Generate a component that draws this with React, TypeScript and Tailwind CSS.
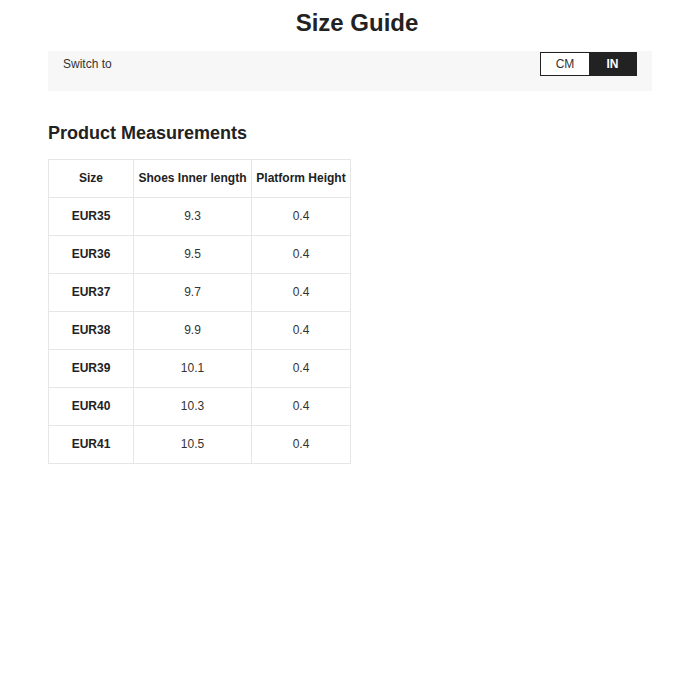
import { useState } from "react";

const rows = [
  { size: "EUR35", inner: "9.3", platform: "0.4" },
  { size: "EUR36", inner: "9.5", platform: "0.4" },
  { size: "EUR37", inner: "9.7", platform: "0.4" },
  { size: "EUR38", inner: "9.9", platform: "0.4" },
  { size: "EUR39", inner: "10.1", platform: "0.4" },
  { size: "EUR40", inner: "10.3", platform: "0.4" },
  { size: "EUR41", inner: "10.5", platform: "0.4" },
];

export default function App() {
  const [unit, setUnit] = useState<"cm" | "in">("in");

  return (
    <div className="min-h-[700px] bg-white pl-[48px] pr-[22px] font-['Liberation_Sans',Arial,sans-serif] text-[#222]">
      <h1 className="mt-[5px] mb-[10px] pl-[14px] text-center text-[24px] font-bold leading-[36px]">
        Size Guide
      </h1>

      <div className="flex h-[40px] items-start justify-between bg-[#f7f7f7] px-[15px] pt-px">
        <span className="mt-[4px] text-[12px] leading-[16px] text-[#333]">Switch to</span>
        <div className="flex h-[24px] border border-[#222] text-[12px]">
          <button
            onClick={() => setUnit("cm")}
            className={
              unit === "cm"
                ? "w-[48px] bg-[#222] font-bold text-white"
                : "w-[48px] bg-white text-[#333]"
            }
          >
            CM
          </button>
          <button
            onClick={() => setUnit("in")}
            className={
              unit === "in"
                ? "w-[47px] bg-[#222] font-bold text-white"
                : "w-[47px] bg-white text-[#333]"
            }
          >
            IN
          </button>
        </div>
      </div>

      <h2 className="mt-[30px] mb-[14px] text-[18px] font-bold leading-[24px]">
        Product Measurements
      </h2>

      <table className="border-collapse text-[12px] leading-[16px]">
        <thead>
          <tr className="h-[38px]">
            <th className="w-[85px] border border-[#e6e6e6] pb-[2px] font-bold">Size</th>
            <th className="w-[118px] border border-[#e6e6e6] pb-[2px] font-bold">Shoes Inner length</th>
            <th className="w-[99px] border border-[#e6e6e6] pb-[2px] font-bold">Platform Height</th>
          </tr>
        </thead>
        <tbody>
          {rows.map((r) => (
            <tr key={r.size} className="h-[38px] text-center">
              <td className="border border-[#e6e6e6] pb-[2px] font-bold">{r.size}</td>
              <td className="border border-[#e6e6e6] pb-[2px] text-[#333]">{r.inner}</td>
              <td className="border border-[#e6e6e6] pb-[2px] text-[#333]">{r.platform}</td>
            </tr>
          ))}
        </tbody>
      </table>
    </div>
  );
}
